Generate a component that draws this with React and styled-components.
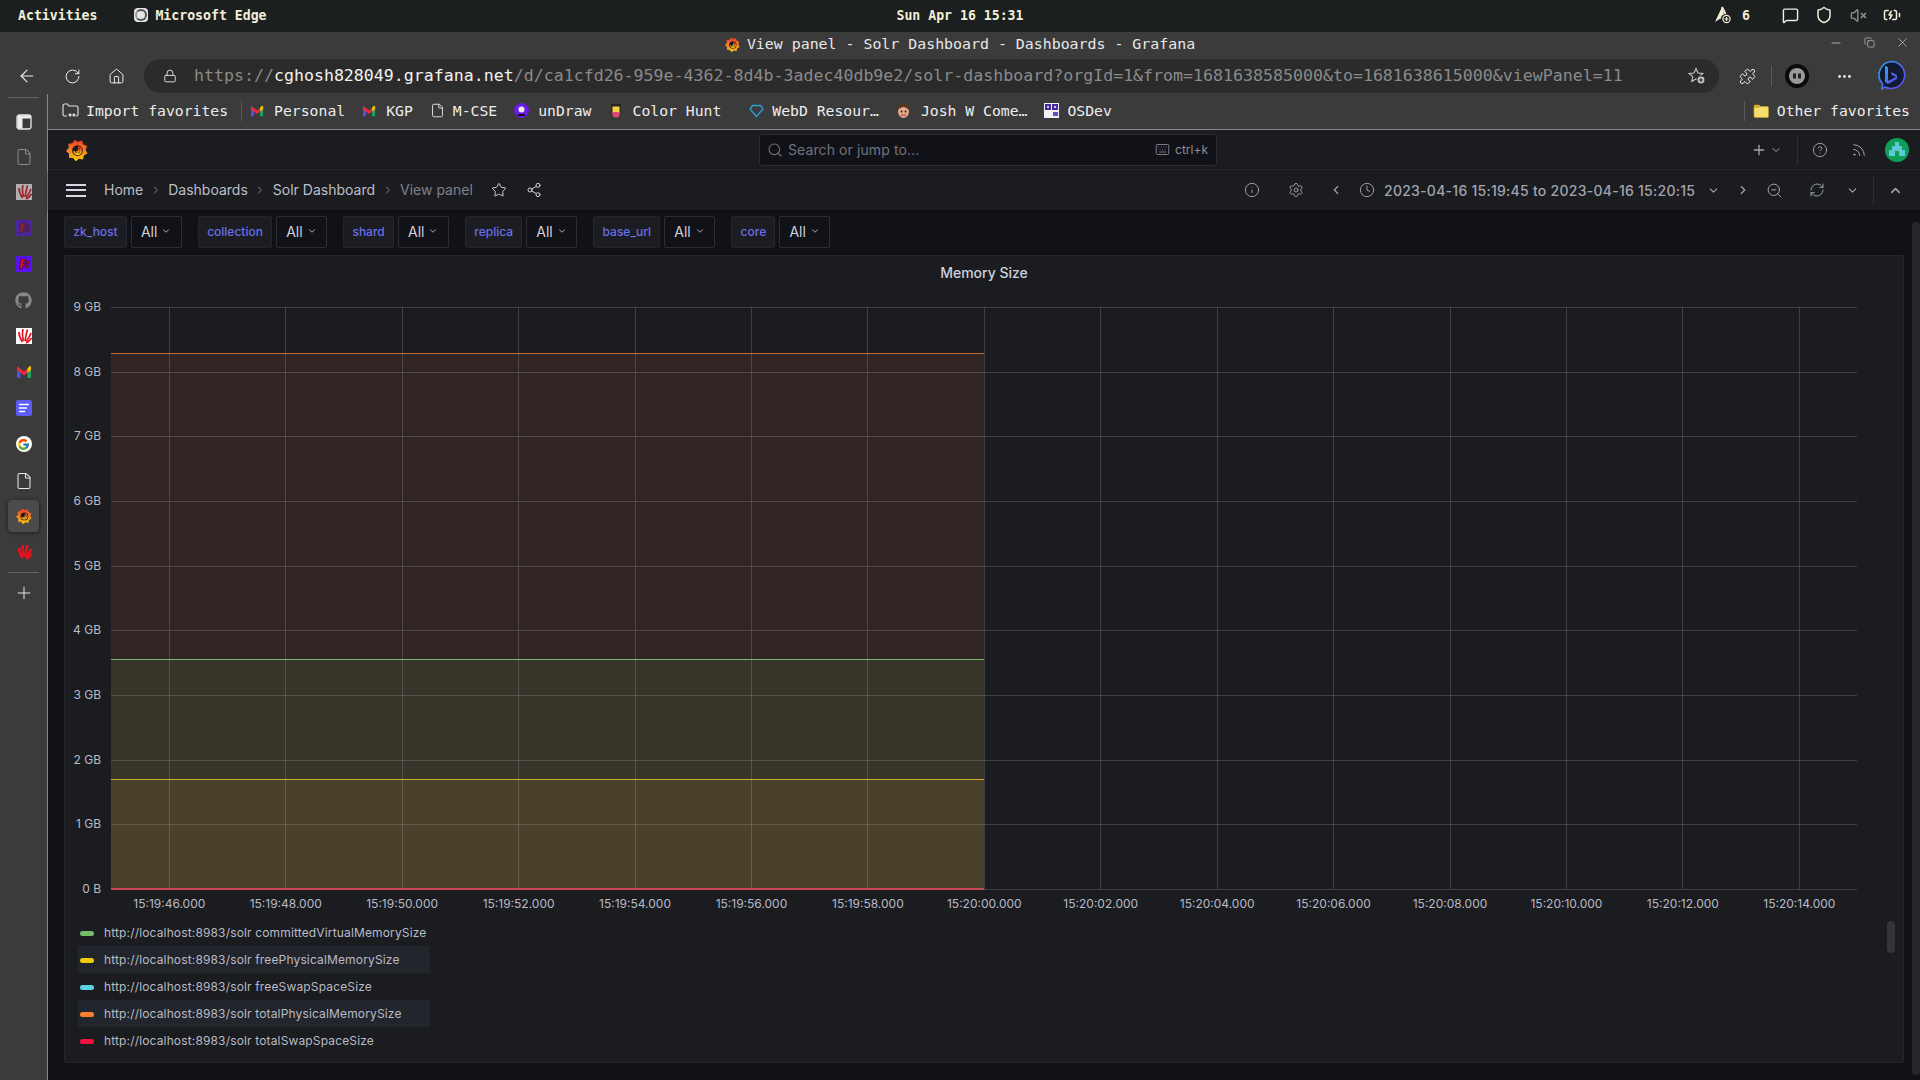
import styled, { createGlobalStyle } from "styled-components";
import { useId } from "react";
import {
  ArrowLeft,
  RotateCw,
  Home,
  Lock,
  Star,
  Share2,
  Info,
  Settings,
  ChevronLeft,
  ChevronRight,
  ChevronDown,
  ChevronUp,
  Clock,
  ZoomOut,
  RefreshCw,
  Plus,
  CircleHelp,
  Rss,
  Search,
  Keyboard,
  File,
  Puzzle,
  MessageSquare,
  Shield,
  VolumeX,
  BatteryCharging,
  Minus,
  Copy,
  X,
  MoreHorizontal,
} from "lucide-react";
import { FaGithub } from "react-icons/fa";
import { FcGoogle } from "react-icons/fc";

const GlobalStyle = createGlobalStyle`
  html, body { margin: 0; padding: 0; background: #111217; }
  * { box-sizing: border-box; }
`;

const MONO = `"DejaVu Sans Mono", "Liberation Mono", monospace`;
const SANS = `Inter, "Liberation Sans", sans-serif`;

const Screen = styled.div`
  width: 1920px;
  height: 1080px;
  display: flex;
  flex-direction: column;
  overflow: hidden;
  position: relative;
  font-family: ${SANS};
`;

const OsBar = styled.div`
  height: 32px;
  background: #1b1f20;
  color: #f3eed6;
  font-family: ${MONO};
  font-size: 13.2px;
  font-weight: 700;
  display: grid;
  grid-template-columns: 1fr auto 1fr;
  align-items: center;
  flex-shrink: 0;
  padding-bottom: 2px;
`;

const OsLeft = styled.div`
  display: flex;
  align-items: center;
  padding-left: 18px;
`;

const EdgeBadge = styled.span`
  width: 14px;
  height: 14px;
  margin-left: 37px;
  margin-right: 7px;
  border-radius: 4px;
  background: #e6e6e6;
  display: flex;
  align-items: center;
  justify-content: center;
  &::after {
    content: "";
    width: 8px;
    height: 8px;
    border-radius: 50%;
    border: 2px solid #555;
    border-left-color: #999;
  }
`;

const OsRight = styled.div`
  display: flex;
  justify-content: flex-end;
  align-items: center;
  padding-right: 11px;
`;

const TitleBar = styled.div`
  height: 26px;
  background: #3b3b3b;
  color: #e8e8e8;
  font-family: ${MONO};
  font-size: 14.9px;
  display: flex;
  align-items: center;
  justify-content: center;
  position: relative;
  flex-shrink: 0;
  padding-bottom: 2px;
`;

const TitleText = styled.span`
  margin-left: 7px;
`;

const WindowButtons = styled.div`
  position: absolute;
  right: 1px;
  top: 3px;
  display: flex;
  color: #c9c9c9;
`;

const Toolbar = styled.div`
  height: 36px;
  background: #3b3b3b;
  display: flex;
  align-items: center;
  padding-left: 5px;
  flex-shrink: 0;
`;

const Slot = styled.span`
  width: ${(p) => p.$w}px;
  flex-shrink: 0;
  display: flex;
  align-items: center;
  justify-content: center;
  color: ${(p) => p.$color || "inherit"};
`;

const UrlBar = styled.div`
  width: 1575px;
  height: 34px;
  margin-left: 7px;
  margin-right: 14px;
  background: #2b2b2b;
  border-radius: 17px;
  display: flex;
  align-items: center;
  padding-left: 14px;
  padding-right: 10px;
  font-family: ${MONO};
  font-size: 16.6px;
  color: #8a8a8a;
  white-space: nowrap;
`;

const UrlText = styled.span`
  flex: 1;
  margin-left: 12px;
  margin-top: -2px;
`;

const UrlHost = styled.span`
  color: #f2f2f2;
`;

const VLine = styled.span`
  display: block;
  width: 1px;
  flex-shrink: 0;
  height: ${(p) => p.$h}px;
  margin-right: ${(p) => p.$mr || 0}px;
  background: ${(p) => p.$color || "#5a5a5a"};
`;

const Body = styled.div`
  flex: 1;
  display: flex;
  min-height: 0;
`;

const Sidebar = styled.div`
  width: 48px;
  flex-shrink: 0;
  background: #3b3b3b;
  border-right: 1px solid #8a8a8a;
  display: flex;
  flex-direction: column;
  align-items: center;
  padding-top: 3px;
`;

const SideRule = styled.div`
  width: 31px;
  height: 1px;
  background: #636363;
  flex-shrink: 0;
`;

const SideItem = styled.div`
  width: 31px;
  height: ${(p) => p.$h || 36}px;
  flex-shrink: 0;
  display: flex;
  align-items: center;
  justify-content: center;
  border-radius: 4px;
  opacity: ${(p) => p.$fade || 1};
  background: ${(p) => (p.$active ? "#4b4b4b" : "transparent")};
  box-shadow: ${(p) => (p.$active ? "0 1px 4px rgba(0,0,0,.5)" : "none")};
  color: #e8e8e8;
`;

const Main = styled.div`
  flex: 1;
  min-width: 0;
  display: flex;
  flex-direction: column;
`;

const Bookmarks = styled.div`
  height: 36px;
  background: #3b3b3b;
  border-bottom: 1px solid #8a8a8a;
  display: flex;
  align-items: center;
  padding-left: 14px;
  padding-right: 10px;
  padding-bottom: 2px;
  font-family: ${MONO};
  font-size: 14.75px;
  color: #ededed;
  flex-shrink: 0;
  white-space: pre;
`;

const Bookmark = styled.div`
  display: flex;
  align-items: center;
  gap: ${(p) => p.$gap || 6}px;
  margin-right: ${(p) => p.$mr || 17}px;
`;

const BookmarkEnd = styled.div`
  margin-left: auto;
  display: flex;
  align-items: center;
  gap: 6px;
`;

const Page = styled.div`
  flex: 1;
  background: #111217;
  min-height: 0;
  display: flex;
  flex-direction: column;
`;

const TopNav = styled.div`
  height: 40px;
  background: #1a1c20;
  border-bottom: 1px solid #25272c;
  display: grid;
  grid-template-columns: 711px 458px 1fr;
  align-items: center;
  flex-shrink: 0;
`;

const LogoWrap = styled.div`
  padding-left: 18px;
  display: flex;
`;

const SearchBox = styled.div`
  height: 32px;
  background: #111217;
  border: 1px solid #2a2c31;
  border-radius: 2px;
  display: flex;
  align-items: center;
  padding: 0 8px 0 7px;
  color: #72737d;
  font-size: 14px;
`;

const SearchText = styled.span`
  margin-left: 5px;
  flex: 1;
  letter-spacing: 0.1px;
`;

const Hint = styled.span`
  display: flex;
  align-items: center;
  gap: 5px;
  font-size: 12px;
  color: #8a8b96;
`;

const NavTools = styled.div`
  display: flex;
  justify-content: flex-end;
  align-items: center;
  padding-right: 13px;
  color: #a3a4b0;
`;

const Avatar = styled.svg`
  width: 24px;
  height: 24px;
  flex-shrink: 0;
`;

const CrumbBar = styled.div`
  height: 40px;
  background: #1a1c20;
  box-shadow: 0 1px 2px rgba(0, 0, 0, 0.6);
  display: flex;
  align-items: center;
  padding-left: 18px;
  padding-right: 13px;
  color: #a3a4b0;
  flex-shrink: 0;
  position: relative;
`;

const Burger = styled.span`
  width: 20px;
  height: 13px;
  margin-right: 18px;
  border-top: 2px solid #d8d8e4;
  border-bottom: 2px solid #d8d8e4;
  position: relative;
  &::after {
    content: "";
    position: absolute;
    left: 0;
    right: 0;
    top: 3.5px;
    height: 2px;
    background: #d8d8e4;
  }
`;

const Crumb = styled.span`
  font-size: 14px;
  margin-top: -1px;
  color: ${(p) => (p.$current ? "#7f808b" : "#bdbec8")};
  white-space: nowrap;
`;

const CrumbSep = styled.span`
  width: ${(p) => p.$w || 25}px;
  display: flex;
  justify-content: center;
  color: #7f808b;
`;

const DashTools = styled.div`
  margin-left: auto;
  display: flex;
  align-items: center;
`;

const TimeText = styled.span`
  margin-left: 2px;
  width: 311px;
  font-size: 14px;
  font-weight: 500;
  letter-spacing: 0.26px;
  color: #a3a4b0;
  white-space: nowrap;
`;

const VarRow = styled.div`
  height: 32px;
  margin: 6px 0 7px 16px;
  display: flex;
  flex-shrink: 0;
`;

const VarGroup = styled.div`
  display: flex;
  gap: 4px;
  margin-right: 16px;
`;

const VarLabel = styled.div`
  background: #1b1d22;
  border: 1px solid #24262b;
  border-radius: 2px;
  padding: 0 8.25px 2px;
  display: flex;
  align-items: center;
  font-size: 12px;
  font-weight: 500;
  color: #6a6ee8;
`;

const VarSelect = styled.div`
  width: 51px;
  background: #111217;
  border: 1px solid #2b2d32;
  border-radius: 2px;
  padding-left: 9px;
  padding-bottom: 2px;
  display: flex;
  align-items: center;
  gap: 4px;
  font-size: 14px;
  color: #d0d0dc;
`;

const Panel = styled.section`
  width: 1840px;
  height: 808px;
  margin-left: 16px;
  background: #1a1c20;
  border: 1px solid #24262b;
  border-radius: 2px;
  position: relative;
`;

const PanelTitle = styled.h2`
  margin: 0;
  height: 36px;
  padding-bottom: 3px;
  display: flex;
  align-items: center;
  justify-content: center;
  font-size: 14px;
  font-weight: 500;
  color: #d0d0dc;
`;

const ChartSvg = styled.svg`
  display: block;
  width: 1838px;
  height: 627px;
  text {
    font-family: ${SANS};
    font-size: 12px;
    fill: #b9bac6;
  }
`;

const Legend = styled.ul`
  list-style: none;
  margin: 0 0 0 13px;
  padding: 0;
`;

const LegendRow = styled.li`
  width: 352px;
  height: 27px;
  padding-left: 2px;
  display: flex;
  align-items: center;
  font-size: 12px;
  letter-spacing: 0.15px;
  color: #b9bac6;
  background: ${(p) => (p.$striped ? "#22252b" : "transparent")};
`;

const Swatch = styled.i`
  width: 14px;
  height: 5px;
  margin-top: 2px;
  border-radius: 2.5px;
  margin-right: 10px;
  background: ${(p) => p.$color};
`;

const LegendThumb = styled.div`
  position: absolute;
  left: 1822px;
  top: 665px;
  width: 8px;
  height: 32px;
  border-radius: 4px;
  background: #33353a;
`;

const PageThumb = styled.div`
  position: absolute;
  left: 1912px;
  top: 222px;
  width: 8px;
  height: 853px;
  border-radius: 4px;
  background: #25272c;
`;

// logos and small pictures

const GrafanaLogo = ({ size = 22 }) => {
  const id = useId();
  const teeth = 9;
  let d = "";
  for (let i = 0; i < teeth * 2; i++) {
    const r = i % 2 === 0 ? 12 : 9.4;
    const a = (i / (teeth * 2)) * Math.PI * 2 - 1.1;
    d += `${i === 0 ? "M" : "L"}${(12 + r * Math.cos(a)).toFixed(2)} ${(12.4 + r * Math.sin(a)).toFixed(2)}`;
  }
  return (
    <svg width={size} height={size} viewBox="0 0 24 24">
      <defs>
        <linearGradient id={id} x1="0" y1="0" x2="0" y2="1">
          <stop offset="0" stopColor="#f0342a" />
          <stop offset="0.55" stopColor="#f58a1f" />
          <stop offset="1" stopColor="#fbca0a" />
        </linearGradient>
      </defs>
      <path d={d + "Z"} fill={`url(#${id})`} />
      <circle cx="12.5" cy="12.6" r="5.800" fill="#1a1b1f" />
      <path
        d="M13 8.800a3.900 3.900 0 1 1-4.300 4.500M12.800 11.500a1.400 1.400 0 1 1-1.300 1.900"
        fill="none"
        stroke={`url(#${id})`}
        strokeWidth="1.800"
      />
    </svg>
  );
};

const GmailIcon = ({ size = 14 }) => (
  <svg width={size} height={size} viewBox="0 0 16 16">
    <rect x="1" y="4" width="3.5" height="10" fill="#4a52e8" />
    <rect x="11.5" y="4" width="3.5" height="10" fill="#21a366" />
    <path d="M1 2 8 7.500 15 2V6L8 11.500 1 6z" fill="#ea2b3c" />
    <path d="M11.500 4.700 13.500 2A1.200 1.200 0 0 1 15 3V6L11.500 8.700z" fill="#f4c20d" />
  </svg>
);

const FanLogo = ({ size = 16, plain }) => (
  <svg width={size} height={size} viewBox="0 0 16 16">
    {!plain && <rect width="16" height="16" fill="#fff" />}
    <g fill="none" stroke="#e2121f" strokeWidth={plain ? 2.6 : 1.7}>
      <path d="M6.500 14C4.500 11 3 8 3 4" />
      <path d="M7.500 13C6.500 9 6 5 7 1" />
      <path d="M9 13C9.500 9 10.500 5 11.500 1.500" />
      <path d="M10 13.500C12 11 14 8 15 5" />
      <path d="M10 15C12 14 14 12.500 15.500 10" />
    </g>
  </svg>
);

const FlagLogo = ({ size = 16 }) => (
  <svg width={size} height={size} viewBox="0 0 16 16">
    <rect width="16" height="16" fill="#5a12f0" />
    <path d="M5 3h5L9.600 5.500H7.600L7.200 7.500H9.200L8.800 9.500H6.800L6.300 13H3.500z" fill="#e8102a" stroke="#000" strokeWidth=".5" />
    <rect x="10.500" y="5" width="2.500" height="2.500" fill="#e8102a" stroke="#000" strokeWidth=".5" />
    <rect x="10" y="9" width="2.500" height="2.500" fill="#e8102a" stroke="#000" strokeWidth=".5" />
  </svg>
);

const NotesLogo = () => (
  <svg width="16" height="16" viewBox="0 0 16 16">
    <rect width="16" height="16" rx="2" fill="#5b5bf5" />
    <path d="M3 4.500h10M3 8h8M3 11.500h6" stroke="#fff" strokeWidth="1.600" />
  </svg>
);

const GoogleBadge = styled.span`
  width: 16px;
  height: 16px;
  border-radius: 50%;
  background: #fff;
  display: flex;
  align-items: center;
  justify-content: center;
`;

const TabsIcon = () => (
  <svg width="16" height="16" viewBox="0 0 16 16">
    <rect x="1" y="1" width="14" height="14" rx="2.500" fill="none" stroke="#ececec" strokeWidth="1.300" />
    <path d="M1.500 5V3a1.500 1.500 0 0 1 1.500-1.500h10A1.500 1.500 0 0 1 14.500 3v1.500H6.500V14.500H3A1.500 1.500 0 0 1 1.500 13z" fill="#ececec" />
  </svg>
);

const ImportIcon = () => (
  <svg width="17" height="15" viewBox="0 0 17 15" fill="none" stroke="#e6e6e6" strokeWidth="1.100">
    <path d="M5 13H2.500A1.500 1.500 0 0 1 1 11.500v-9A1.500 1.500 0 0 1 2.500 1h3l1.500 2h7.500A1.500 1.500 0 0 1 16 4.500v7a1.500 1.500 0 0 1-1.500 1.500H14" />
    <path d="M7 12h6M8.500 10.500 7 12l1.500 1.500M11.500 10.500 13 12l-1.500 1.500" />
  </svg>
);

const UndrawIcon = () => (
  <svg width="15" height="15" viewBox="0 0 15 15">
    <circle cx="7.500" cy="7.500" r="7.500" fill="#6c1be0" />
    <circle cx="7.500" cy="6.500" r="3" fill="#ececec" />
    <path d="M3 13a5 4 0 0 1 9 0z" fill="#111" />
  </svg>
);

const HuntIcon = () => (
  <svg width="14" height="16" viewBox="0 0 14 16">
    <rect x="2" y="1" width="10" height="1.800" fill="#222" />
    <path d="M3 3h8v8a4 4 0 0 1-8 0z" fill="#f4d03f" stroke="#222" />
    <path d="M3.500 9h7v2a3.500 3.500 0 0 1-7 0z" fill="#e0457b" />
  </svg>
);

const GemIcon = () => (
  <svg width="15" height="14" viewBox="0 0 15 14" fill="none" stroke="#2aa3d8" strokeWidth="1.300">
    <path d="M3.500 1.500h8l2.500 3.500-6.500 7.500L1 5z" />
  </svg>
);

const FaceIcon = () => (
  <svg width="15" height="17" viewBox="0 0 15 17">
    <ellipse cx="7.500" cy="9.500" rx="5.500" ry="6.500" fill="#e3a98a" />
    <path d="M2 8C1 3 5 1 8 1s5 3 5 7C11 6 9 5 7 5 5 6 3 6 2 8z" fill="#5a3522" />
    <circle cx="5.500" cy="9.500" r=".9" fill="#222" />
    <circle cx="9.500" cy="9.500" r=".9" fill="#222" />
    <path d="M5 13h5" stroke="#a0523d" strokeWidth="1.200" />
  </svg>
);

const OsDevIcon = () => (
  <svg width="15" height="15" viewBox="0 0 15 15">
    <rect width="15" height="15" fill="#f2f2f2" />
    <rect x="1" y="1" width="6" height="6" fill="#4a2aa0" />
    <rect x="8" y="1" width="6" height="6" fill="#4a2aa0" />
    <rect x="9" y="9" width="5" height="4" fill="#6a4ac0" />
    <path d="M3 3h2v2H3zM10 3h2v2h-2z" fill="#cfc6ee" />
  </svg>
);

const FolderIcon = () => (
  <svg width="16" height="14" viewBox="0 0 16 14">
    <path d="M1 2.500A1.500 1.500 0 0 1 2.500 1h3.500l1.500 1.500H14A1.500 1.500 0 0 1 15.500 4v8a1.500 1.500 0 0 1-1.500 1.500H2.500A1.500 1.500 0 0 1 1 12z" fill="#f7dc6f" stroke="#c9a227" strokeWidth=".6" />
    <path d="M1 2.500A1.500 1.500 0 0 1 2.500 1h3.500l1.500 1.500L6 4H1z" fill="#d6ad2b" />
  </svg>
);

const QuoteBadge = () => (
  <svg width="24" height="24" viewBox="0 0 24 24">
    <circle cx="12" cy="12" r="12" fill="#0b0b0b" />
    <circle cx="12" cy="12" r="8" fill="#9a9a9a" />
    <path d="M8 9.500h3v5H8zM13 9.500h3v5h-3z" fill="#222" />
  </svg>
);

const StarAdd = () => (
  <svg width="18" height="18" viewBox="0 0 18 18" fill="none" stroke="#c9c9c9" strokeWidth="1.100">
    <path d="M8 1.500 10 6l4.800.5-3.600 3.200 1 4.800L8 12l-4.200 2.500 1-4.800L1.200 6.500 6 6z" />
    <circle cx="13" cy="13" r="4" fill="#c9c9c9" stroke="#2b2b2b" />
    <path d="M13 11v4M11 13h4" stroke="#2b2b2b" />
  </svg>
);

const BingIcon = () => {
  const id = useId();
  return (
    <svg width="30" height="32" viewBox="0 0 30 32">
      <defs>
        <linearGradient id={id} x1="0" y1="0" x2="1" y2="1">
          <stop offset="0" stopColor="#2aa8f0" />
          <stop offset="1" stopColor="#6a3ef0" />
        </linearGradient>
      </defs>
      <path d="M15 1.500A13.500 13.500 0 1 1 8 27l-3 2 .5-5A13.500 13.500 0 0 1 15 1.500z" fill="#111a2e" stroke={`url(#${id})`} strokeWidth="1.600" />
      <path d="M11 7v14l8-4-4-2-1-3 6 3v4l-9 5-3-2V6z" fill={`url(#${id})`} />
    </svg>
  );
};

const ArchPlus = () => (
  <svg width="18" height="18" viewBox="0 0 18 18">
    <path d="M8 1 1 16c2-1.500 4-3 6-3.500 0-2 .8-3.500 3-4z" fill="#f3eed6" />
    <path d="M8 1l3.500 7" stroke="#f3eed6" strokeWidth="2" />
    <circle cx="12.500" cy="13" r="3.600" fill="none" stroke="#f3eed6" strokeWidth="1.200" />
    <path d="M12.500 11v4M10.500 13h4" stroke="#f3eed6" strokeWidth="1.200" />
  </svg>
);

const sidebarItems = [
  { key: "tabs", node: <TabsIcon /> },
  { key: "doc", h: 34, fade: 0.45, node: <File size={18} strokeWidth={1.4} /> },
  { key: "fan1", fade: 0.6, node: <FanLogo /> },
  { key: "flag1", fade: 0.55, node: <FlagLogo /> },
  { key: "flag2", node: <FlagLogo /> },
  { key: "git", fade: 0.8, node: <FaGithub size={17} color="#9a9a9a" /> },
  { key: "fan2", node: <FanLogo /> },
  { key: "mail", node: <GmailIcon size={16} /> },
  { key: "notes", node: <NotesLogo /> },
  { key: "google", node: <GoogleBadge><FcGoogle size={13} /></GoogleBadge> },
  { key: "doc2", h: 38, node: <File size={18} strokeWidth={1.4} /> },
  { key: "grafana", h: 32, active: true, node: <GrafanaLogo size={16} /> },
  { key: "fan3", h: 40, node: <FanLogo plain /> },
];

const variables = ["zk_host", "collection", "shard", "replica", "base_url", "core"];

const legendItems = [
  { name: "committedVirtualMemorySize", color: "#73bf69" },
  { name: "freePhysicalMemorySize", color: "#f2cc0c" },
  { name: "freeSwapSpaceSize", color: "#5cd0e4" },
  { name: "totalPhysicalMemorySize", color: "#ff7f30" },
  { name: "totalSwapSpaceSize", color: "#f2103f" },
];

// chart drawn in page coordinates through the viewBox
const PLOT_LEFT = 111;
const PLOT_RIGHT = 1857;
const PLOT_BOTTOM = 889;
const GB_STEP = 64.67;
const DATA_END = 984;

const pad = (n) => String(n).padStart(2, "0");

const xTicks = Array.from({ length: 15 }, (_, i) => {
  const total = 19 * 60 + 46 + i * 2;
  return {
    x: 169.3 + i * 116.43,
    label: `15:${pad(Math.floor(total / 60))}:${pad(total % 60)}.000`,
  };
});

const yTicks = Array.from({ length: 10 }, (_, i) => ({
  y: PLOT_BOTTOM - i * GB_STEP,
  label: i === 0 ? "0 B" : `${i} GB`,
}));

const MemoryChart = () => (
  <ChartSvg viewBox="65 292 1838 627">
    <rect x={PLOT_LEFT} y="353" width={DATA_END - PLOT_LEFT} height="306" fill="#302524" />
    <rect x={PLOT_LEFT} y="659" width={DATA_END - PLOT_LEFT} height="121" fill="#38342a" />
    <rect x={PLOT_LEFT} y="780" width={DATA_END - PLOT_LEFT} height="109" fill="#4a412a" />
    {yTicks.map((t) => (
      <line key={t.label} x1={PLOT_LEFT} x2={PLOT_RIGHT} y1={Math.round(t.y) + 0.5} y2={Math.round(t.y) + 0.5} stroke="rgba(204,204,220,0.2)" />
    ))}
    {xTicks.map((t) => (
      <line key={t.label} x1={Math.floor(t.x) + 0.5} x2={Math.floor(t.x) + 0.5} y1="307" y2={PLOT_BOTTOM} stroke="rgba(204,204,220,0.2)" />
    ))}
    <line x1={PLOT_LEFT} x2={DATA_END} y1="353.5" y2="353.5" stroke="#c26f3c" />
    <line x1={PLOT_LEFT} x2={DATA_END} y1="659.5" y2="659.5" stroke="#76b56a" />
    <line x1={PLOT_LEFT} x2={DATA_END} y1="779.5" y2="779.5" stroke="#d0ab2c" />
    <line x1={PLOT_LEFT} x2={DATA_END} y1="889" y2="889" stroke="#c9485a" strokeWidth="2" />
    {yTicks.map((t) => (
      <text key={t.label} x="101" y={t.y + 4} textAnchor="end">
        {t.label}
      </text>
    ))}
    {xTicks.map((t) => (
      <text key={t.label} x={t.x} y="908" textAnchor="middle">
        {t.label}
      </text>
    ))}
  </ChartSvg>
);

const App = () => {
  return (
    <Screen>
      <GlobalStyle />
      <OsBar>
        <OsLeft>
          Activities
          <EdgeBadge />
          Microsoft Edge
        </OsLeft>
        <span>Sun Apr 16 15:31</span>
        <OsRight>
          <ArchPlus />
          <Slot $w={28}>6</Slot>
          <Slot $w={13} />
          <Slot $w={34}><MessageSquare size={17} strokeWidth={2} /></Slot>
          <Slot $w={34}><Shield size={18} strokeWidth={2} /></Slot>
          <Slot $w={34} $color="#8b8b80"><VolumeX size={17} strokeWidth={2} /></Slot>
          <Slot $w={34}><BatteryCharging size={18} strokeWidth={2} /></Slot>
        </OsRight>
      </OsBar>

      <TitleBar>
        <GrafanaLogo size={15} />
        <TitleText>View panel - Solr Dashboard - Dashboards - Grafana</TitleText>
        <WindowButtons>
          <Slot $w={34}><Minus size={14} strokeWidth={1.4} /></Slot>
          <Slot $w={32}><Copy size={11} strokeWidth={1.4} /></Slot>
          <Slot $w={34}><X size={15} strokeWidth={1.2} /></Slot>
        </WindowButtons>
      </TitleBar>

      <Toolbar>
        <Slot $w={44} $color="#ededed"><ArrowLeft size={20} strokeWidth={1.4} /></Slot>
        <Slot $w={46} $color="#ededed"><RotateCw size={17} strokeWidth={1.4} /></Slot>
        <Slot $w={42} $color="#ededed"><Home size={17} strokeWidth={1.4} /></Slot>
        <UrlBar>
          <Slot $w={24} $color="#ededed"><Lock size={14} strokeWidth={1.5} /></Slot>
          <UrlText>
            https://<UrlHost>cghosh828049.grafana.net</UrlHost>
            /d/ca1cfd26-959e-4362-8d4b-3adec40db9e2/solr-dashboard?orgId=1&amp;from=1681638585000&amp;to=1681638615000&amp;viewPanel=11
          </UrlText>
          <Slot $w={24}><StarAdd /></Slot>
        </UrlBar>
        <Slot $w={28} $color="#ededed"><Puzzle size={17} strokeWidth={1.4} /></Slot>
        <Slot $w={20}><VLine $h={20} /></Slot>
        <Slot $w={32}><QuoteBadge /></Slot>
        <Slot $w={62} $color="#ededed"><MoreHorizontal size={17} /></Slot>
        <Slot $w={34}><BingIcon /></Slot>
      </Toolbar>

      <Body>
        <Sidebar>
          <SideRule />
          <SideItem $h={6} />
          {sidebarItems.map((item) => (
            <SideItem key={item.key} $h={item.h} $fade={item.fade} $active={item.active}>
              {item.node}
            </SideItem>
          ))}
          <SideRule />
          <SideItem $h={40}><Plus size={20} strokeWidth={1.2} /></SideItem>
        </Sidebar>

        <Main>
          <Bookmarks>
            <Bookmark $gap={7} $mr={13}><ImportIcon />Import favorites</Bookmark>
            <VLine $h={20} $mr={8} />
            <Bookmark $gap={10}><GmailIcon />Personal</Bookmark>
            <Bookmark $gap={10}><GmailIcon />KGP</Bookmark>
            <Bookmark $gap={8}><File size={15} strokeWidth={1.4} />M-CSE</Bookmark>
            <Bookmark $gap={9}><UndrawIcon />unDraw</Bookmark>
            <Bookmark $gap={10} $mr={28}><HuntIcon />Color Hunt</Bookmark>
            <Bookmark $gap={8}><GemIcon />WebD Resour…</Bookmark>
            <Bookmark $gap={10}><FaceIcon />Josh W Come…</Bookmark>
            <Bookmark $gap={8}><OsDevIcon />OSDev</Bookmark>
            <BookmarkEnd>
              <VLine $h={20} />
              <Slot $w={20}><FolderIcon /></Slot>
              Other favorites
            </BookmarkEnd>
          </Bookmarks>

          <Page>
            <TopNav>
              <LogoWrap><GrafanaLogo /></LogoWrap>
              <SearchBox>
                <Search size={16} strokeWidth={1.6} />
                <SearchText>Search or jump to...</SearchText>
                <Hint><Keyboard size={15} strokeWidth={1.4} />ctrl+k</Hint>
              </SearchBox>
              <NavTools>
                <Slot $w={16}><Plus size={16} /></Slot>
                <Slot $w={18}><ChevronDown size={12} /></Slot>
                <Slot $w={24}><VLine $h={28} $color="#2e3035" /></Slot>
                <Slot $w={22}><CircleHelp size={16} strokeWidth={1.4} /></Slot>
                <Slot $w={56}><Rss size={16} strokeWidth={1.5} /></Slot>
                <Slot $w={20}>
                  <Avatar viewBox="0 0 24 24">
                    <circle cx="12" cy="12" r="12" fill="#0f9d58" />
                    <path d="M10 4h4v4h3v4h3v6H4v-6h3V8h3z" fill="#5cc8d8" />
                    <rect x="10" y="13" width="4" height="5" fill="#0f9d58" />
                  </Avatar>
                </Slot>
              </NavTools>
            </TopNav>

            <CrumbBar>
              <Burger />
              <Crumb>Home</Crumb>
              <CrumbSep><ChevronRight size={12} /></CrumbSep>
              <Crumb>Dashboards</Crumb>
              <CrumbSep><ChevronRight size={12} /></CrumbSep>
              <Crumb>Solr Dashboard</Crumb>
              <CrumbSep><ChevronRight size={12} /></CrumbSep>
              <Crumb $current>View panel</Crumb>
              <Slot $w={52} $color="#d0d0dc"><Star size={16} strokeWidth={1.5} /></Slot>
              <Slot $w={18} $color="#d0d0dc"><Share2 size={16} strokeWidth={1.5} /></Slot>
              <DashTools>
                <Slot $w={40}><Info size={16} strokeWidth={1.4} /></Slot>
                <Slot $w={48}><Settings size={16} strokeWidth={1.4} /></Slot>
                <Slot $w={32}><ChevronLeft size={14} /></Slot>
                <Slot $w={30}><Clock size={16} strokeWidth={1.4} /></Slot>
                <TimeText>2023-04-16 15:19:45 to 2023-04-16 15:20:15</TimeText>
                <Slot $w={36}><ChevronDown size={13} /></Slot>
                <Slot $w={24}><ChevronRight size={14} /></Slot>
                <Slot $w={38}><ZoomOut size={17} strokeWidth={1.4} /></Slot>
                <Slot $w={48}><RefreshCw size={16} strokeWidth={1.4} /></Slot>
                <Slot $w={22}><ChevronDown size={13} /></Slot>
                <Slot $w={20}><VLine $h={28} $color="#2e3035" /></Slot>
                <Slot $w={24}><ChevronUp size={15} strokeWidth={2.4} /></Slot>
              </DashTools>
            </CrumbBar>

            <VarRow>
              {variables.map((name) => (
                <VarGroup key={name}>
                  <VarLabel>{name}</VarLabel>
                  <VarSelect>All<ChevronDown size={10} /></VarSelect>
                </VarGroup>
              ))}
            </VarRow>

            <Panel>
              <PanelTitle>Memory Size</PanelTitle>
              <MemoryChart />
              <Legend>
                {legendItems.map((item, i) => (
                  <LegendRow key={item.name} $striped={i % 2 === 1}>
                    <Swatch $color={item.color} />
                    http://localhost:8983/solr {item.name}
                  </LegendRow>
                ))}
              </Legend>
              <LegendThumb />
            </Panel>
          </Page>
        </Main>
      </Body>
      <PageThumb />
    </Screen>
  );
};

export default App;
